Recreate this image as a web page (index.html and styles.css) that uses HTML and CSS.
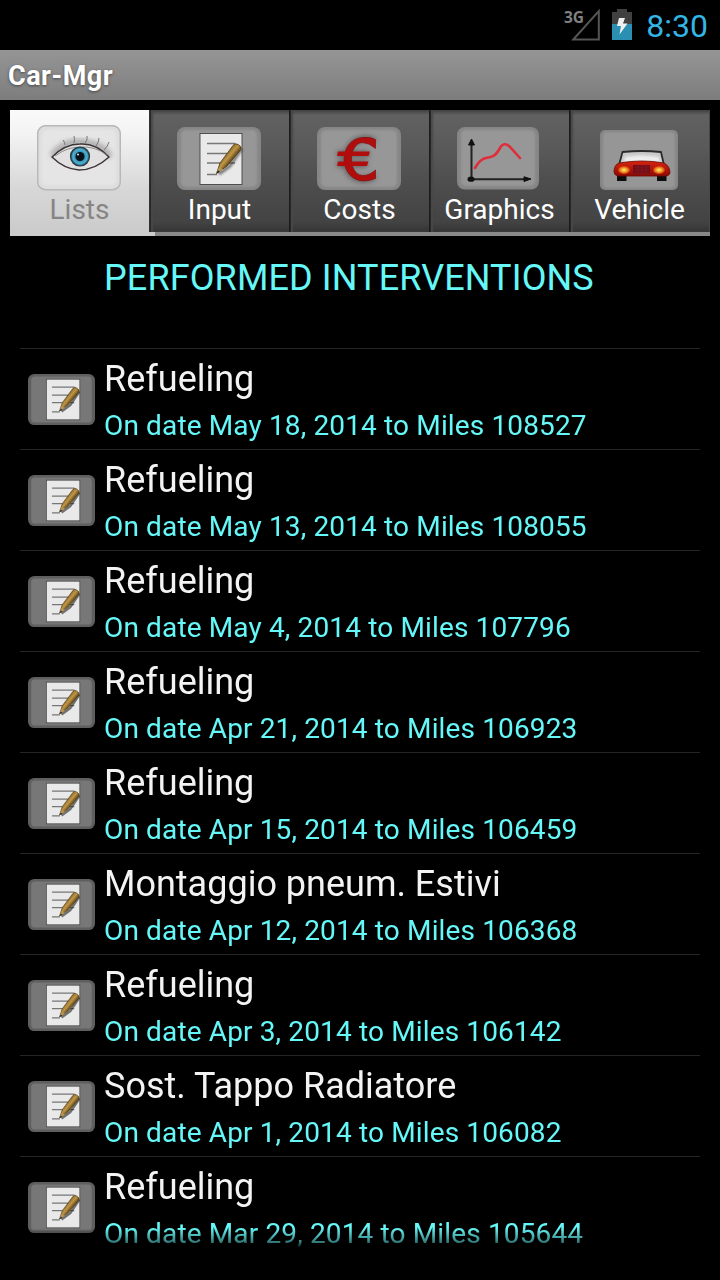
FILE: index.html
```html
<!DOCTYPE html>
<html lang="en">
<head>
<meta charset="utf-8">
<title>Car-Mgr</title>
<link rel="stylesheet" href="styles.css">
</head>
<body>
<svg class="defs" width="0" height="0" aria-hidden="true">
  <defs>
    <filter id="soft" x="-20%" y="-20%" width="140%" height="140%"><feGaussianBlur stdDeviation="1"/></filter>
    <filter id="glow" x="-30%" y="-30%" width="160%" height="160%"><feGaussianBlur stdDeviation="2.5"/></filter>
    <linearGradient id="pencil" x1="0" y1="0" x2="1" y2="1">
      <stop offset="0.3" stop-color="#735316"/><stop offset="0.47" stop-color="#c09748"/><stop offset="0.62" stop-color="#4a3208"/>
    </linearGradient>
    <linearGradient id="carBody" x1="0" y1="0" x2="0" y2="1">
      <stop offset="0" stop-color="#d82410"/><stop offset="1" stop-color="#8c0a04"/>
    </linearGradient>
    <radialGradient id="lamp"><stop offset="0" stop-color="#fff27a"/><stop offset="0.5" stop-color="#f0a028"/><stop offset="1" stop-color="#d83010"/></radialGradient>
    <radialGradient id="iris"><stop offset="0.3" stop-color="#2a6f90"/><stop offset="0.75" stop-color="#4fb4d4"/><stop offset="1" stop-color="#1c3f52"/></radialGradient>
  </defs>
  <symbol id="note" viewBox="0 0 84 64">
    <rect x="23" y="6.5" width="42" height="51" fill="#e9e9e9" stroke="#444" stroke-width="0.9"/>
    <path d="M30 16.500H58M30 26.500H52M30 36H58M30 47.500H40" stroke="#777" stroke-width="1.500"/>
    <path d="M42 47L53 39L64.500 22" fill="none" stroke="#222" stroke-width="3" opacity=".6" filter="url(#soft)"/>
    <path d="M39.500 46.500L43 36L56 18.500Q58 15.500 61 17.500Q65.500 20 63.500 23L50 39Z" fill="url(#pencil)" stroke="#4a3510" stroke-width=".8"/>
    <path d="M39.500 46.500L42 40L46.500 42.500Z" fill="#b59356"/>
    <path d="M39.500 46.500L41 43.500L43 45Z" fill="#222"/>
  </symbol>
</svg>

<header class="status">
  <svg class="signal" width="40" height="36" viewBox="0 0 40 36">
    <path d="M13 31.500L38.500 3V31.500Z" transform="translate(-.7 0)" fill="none" stroke="#555" stroke-width="2"/>
    <text x="3" y="15" class="net">3G</text>
  </svg>
  <svg class="battery" width="20" height="32" viewBox="0 0 20 32">
    <path d="M5 0H15V3H20V15H0V3H5Z" fill="#404040"/>
    <path d="M0 15H20V31H0Z" fill="#2b8fb3"/>
    <path d="M7 9H13L11 14.500H15.500L7.500 25.500L9 17H5Z" fill="#f0f0f0"/>
  </svg>
  <span class="clock">8:30</span>
</header>
<div class="titlebar">Car-Mgr</div>

<nav class="tabs">
  <div class="tab selected">
    <svg class="pic" width="84" height="66" viewBox="0 0 84 66">
      <rect x=".7" y=".7" width="82.600" height="64" rx="8" fill="#dedede" stroke="#b8b8b8" stroke-width="1.500"/>
      <rect x="5" y="5" width="74" height="55" rx="5" fill="#e5e5e5" filter="url(#soft)"/>
      <path d="M15 31Q29 13 50 18Q65 19 73 32" fill="none" stroke="#777" stroke-width="6" opacity=".55" filter="url(#glow)"/>
      <path d="M15 32Q28 19 43 19Q59 18 72 32Q58 45 42 45Q27 44 15 32Z" fill="#e2e0e0" stroke="#3d3436" stroke-width="1.400"/>
      <path d="M18 31Q30 22 43 22Q58 21 70 30" fill="none" stroke="#777" stroke-width=".8"/>
      <path d="M28 20Q28 17 26 15M37 18Q38 14 37 11M48 18Q51 15 50 11M59 21Q62 17 62 13M67 25Q71 21 72 17" fill="none" stroke="#777" stroke-width="1"/>
      <circle cx="43" cy="31.500" r="9.500" fill="url(#iris)" stroke="#263b45" stroke-width="1.200"/>
      <circle cx="43" cy="31.500" r="4.500" fill="#061018"/><circle cx="41" cy="29.500" r="1.100" fill="#b9dbe4"/>
    </svg>
    <span class="label">Lists</span>
  </div>
  <div class="tab">
    <svg class="pic" width="84" height="64" viewBox="0 0 84 64">
      <rect width="84" height="63" rx="8" fill="#868686"/><rect x="4" y="3" width="76" height="57" rx="5" fill="#979797" filter="url(#soft)"/>
      <use href="#note" width="84" height="64"/>
    </svg>
    <span class="label">Input</span>
  </div>
  <div class="tab">
    <svg class="pic" width="84" height="64" viewBox="0 0 84 64">
      <rect width="84" height="63" rx="8" fill="#868686"/><rect x="4" y="3" width="76" height="57" rx="5" fill="#979797" filter="url(#soft)"/>
      <g>
        <path d="M58 14C43 8 31 15 29 31C28 50 43 57 58 49M20 27H52M20 37H50" fill="none" stroke="#444" stroke-width="6" opacity=".7" filter="url(#glow)"/>
        <path d="M58.500 12.500V21.500Q52 15.500 45 15.500C31 17 31 47 45 48.500Q52 49 58.500 43V51.500Q52 54 46 54C21 52 21 13 45 10.500Q53 9.500 58.500 12.500Z" fill="#b20d0d" stroke="#850e0e" stroke-width=".7"/>
        <path d="M21 24.500H53L51.500 29H20ZM21 34.500H51.500L50 39H20Z" fill="#b20d0d"/>
      </g>
    </svg>
    <span class="label">Costs</span>
  </div>
  <div class="tab">
    <svg class="pic graph" width="82" height="64" viewBox="0 0 82 64">
      <rect width="82" height="62.500" rx="8" fill="#868686"/><rect x="4" y="3" width="74" height="56" rx="5" fill="#979797" filter="url(#soft)"/>
      <path d="M14.500 52V15M12 52.200H70" stroke="#222" stroke-width="2" fill="none"/>
      <path d="M14.500 12L11.500 18H17.500ZM74 52L67 49.800V54.500Z" fill="#111" stroke="#111"/>
      <ellipse cx="14" cy="52.200" rx="3.500" ry="2.600" fill="#111"/>
      <path d="M18 41Q23 32 29 31C37 30 39 28 43 21Q47 14 53 20L63 31" fill="none" stroke="#df2d3b" stroke-width="2.600" stroke-linecap="round"/>
    </svg>
    <span class="label">Graphics</span>
  </div>
  <div class="tab">
    <svg class="pic" width="80" height="64" viewBox="0 0 80 64">
      <rect x="1" y="3" width="78" height="60" rx="5" fill="#858585"/><rect x="4" y="5" width="72" height="56" rx="4" fill="#969696" filter="url(#soft)"/>
      <path d="M20 38L23.500 25Q43 23 62 25L65 38Z" fill="#c9c9c9" stroke="#2a2a2a" stroke-width="1.800"/>
      <path d="M26 30Q42 27 60 30L61 35H25Z" fill="#ededed" filter="url(#soft)"/>
      <path d="M18 47H27.500V54H18ZM58 47H67.500V54H58Z" fill="#0d0d0d"/>
      <path d="M20 36Q43 32 65 36Q71 39 71 46Q70 49 67 49H19Q15 48 15 45Q15 38 20 36Z" fill="url(#carBody)" stroke="#6b0903" stroke-width=".8"/>
      <rect x="34" y="38" width="17" height="9" fill="#720d16"/>
      <path d="M35 40H50M35 43H50M35 46H50M39 38V47M43 38V47M47 38V47" stroke="#8c1c28" stroke-width=".6"/>
      <ellipse cx="25" cy="43" rx="6" ry="4" fill="url(#lamp)"/><ellipse cx="60" cy="43" rx="6" ry="4" fill="url(#lamp)"/>
    </svg>
    <span class="label">Vehicle</span>
  </div>
</nav>
<div class="strip"></div>

<h1 class="heading">PERFORMED INTERVENTIONS</h1>
<ul class="list" id="list"></ul>
<script src="list.js"></script>
</body>
</html>
```

FILE: list.js
```js
const entries = [
  ["Refueling", "May 18, 2014", "108527"],
  ["Refueling", "May 13, 2014", "108055"],
  ["Refueling", "May 4, 2014", "107796"],
  ["Refueling", "Apr 21, 2014", "106923"],
  ["Refueling", "Apr 15, 2014", "106459"],
  ["Montaggio pneum. Estivi", "Apr 12, 2014", "106368"],
  ["Refueling", "Apr 3, 2014", "106142"],
  ["Sost. Tappo Radiatore", "Apr 1, 2014", "106082"],
  ["Refueling", "Mar 29, 2014", "105644"]
];
document.getElementById("list").innerHTML = entries.map(([name, date, miles]) => `
  <li class="row">
    <svg class="thumb" width="67" height="51" viewBox="0 0 84 64" preserveAspectRatio="none">
      <rect width="84" height="64" rx="8" fill="#5f5f5f"/>
      <rect x="4" y="3" width="76" height="58" rx="5" fill="#777" filter="url(#soft)"/>
      <use href="#note" width="84" height="64"/>
    </svg>
    <div class="texts"><div class="name">${name}</div><div class="detail">On date ${date} to Miles ${miles}</div></div>
  </li>`).join("");
```

FILE: styles.css
```css
* { box-sizing: border-box; }
body {
  margin: 0;
  width: 720px;
  height: 1280px;
  overflow: hidden;
  background: #000;
  color: #f3f3f3;
  font-family: Roboto, "Noto Sans", sans-serif;
}
.defs { display: block; height: 0; }
.status {
  display: flex;
  align-items: flex-start;
  height: 50px;
  padding: 8px 12px 0 0;
  justify-content: flex-end;
}
.net { font: bold 15.5px "Open Sans", sans-serif; fill: #808080; }
.signal { margin-right: 11px; overflow: visible; }
.battery { margin: 1px 14px 0 0; }
.clock { font-size: 32px; line-height: 36px; color: #33b5e5; }
.titlebar {
  height: 50px;
  padding-left: 8px;
  background: linear-gradient(#959595, #7d7d7d);
  font-size: 27px;
  font-weight: bold;
  letter-spacing: 0.5px;
  line-height: 52px;
  color: #fff;
  text-shadow: 0 1px 3px #444;
}
.tabs { display: flex; height: 122px; margin: 10px 10px 0; }
.tab {
  display: flex;
  flex-direction: column;
  align-items: center;
  width: 140px;
  padding: 17px 2px 0 0;
  border-right: 1px solid #1c1c1c;
  background: linear-gradient(#404040 0, #616161 5px, #5a5a5a 36px, #4d4d4d 75px, #434343 112px, #343434 122px);
  box-shadow: inset 1px 0 0 #282828, inset 3px 0 2px #484848;
}
.tab:last-child { border-right-color: #484848; }
.selected {
  padding: 15px 0 0;
  background: linear-gradient(#fafafa, #f3f3f3 20%, #d7d7d7 65%, #cbcbcb);
  border-right-color: #333;
  box-shadow: none;
}
.pic { display: block; flex: none; }
.selected .pic { margin-right: 1px; }
.graph { margin-right: 2px; }
.label { margin: 2px 0 0 2px; font-size: 28px; line-height: 34px; color: #fff; white-space: nowrap; }
.selected .label { margin-left: 0; color: #858585; }
.strip { height: 4px; margin: 0 10px; background: linear-gradient(90deg, #ccc 145px, #888 145px); }
.heading {
  margin: 0;
  height: 112px;
  padding: 21px 0 0 104px;
  font-size: 36px;
  font-weight: 400;
  line-height: 42px;
  letter-spacing: 0.12px;
  color: #66f8f8;
  white-space: nowrap;
}
.list {
  list-style: none;
  margin: 0 20px;
  padding: 0;
  height: 909px;
  overflow: hidden;
  -webkit-mask-image: linear-gradient(#000 0, #000 880px, rgba(0, 0, 0, 0.5) 894px, transparent 901px);
  mask-image: linear-gradient(#000 0, #000 880px, rgba(0, 0, 0, 0.5) 894px, transparent 901px);
}
.row { display: flex; height: 101px; border-top: 1px solid #252525; padding-left: 8px; }
.thumb { display: block; flex: none; margin: 25px 9px 0 0; }
.texts { padding-top: 9px; white-space: nowrap; }
.name { font-size: 36px; line-height: 43px; }
.detail { margin-top: 8px; font-size: 28px; line-height: 34px; letter-spacing: 0.14px; color: #66f8f8; }
```
